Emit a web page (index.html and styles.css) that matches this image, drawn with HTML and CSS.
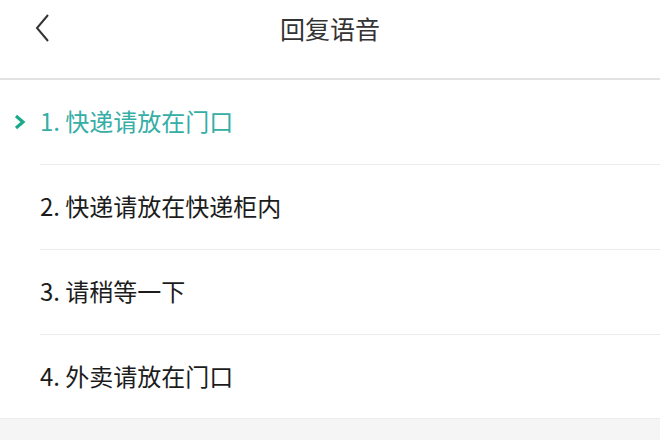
FILE: index.html
```html
<!DOCTYPE html>
<html lang="zh-CN">
<head>
<meta charset="utf-8">
<link rel="stylesheet" href="styles.css">
</head>
<body>
<div class="page">
  <header class="header">
    <span class="back">
      <svg width="18" height="30" viewBox="0 0 18 30"><path d="M14 2 L3 15 L14 28" fill="none" stroke="#333" stroke-width="2"/></svg>
    </span>
    <h1 class="title">回复语音</h1>
  </header>
  <ul class="list">
    <li class="item active">
      <span class="mark"><svg width="12" height="16" viewBox="0 0 12 16"><path d="M2 2 L9 8 L2 14" fill="none" stroke="#1aa98a" stroke-width="3.2"/></svg></span>
      <span class="text">1. 快递请放在门口</span>
    </li>
    <li class="item"><span class="text">2. 快递请放在快递柜内</span></li>
    <li class="item"><span class="text">3. 请稍等一下</span></li>
    <li class="item"><span class="text">4. 外卖请放在门口</span></li>
  </ul>
  <div class="footer"></div>
</div>
</body>
</html>
```
FILE: styles.css
```css
* { box-sizing: border-box; }
html, body { margin: 0; padding: 0; }
body {
  width: 660px;
  height: 440px;
  overflow: hidden;
  background: #fff;
  font-family: "Noto Sans CJK SC", "Noto Sans", sans-serif;
}
.page { display: flex; flex-direction: column; height: 440px; }
.header {
  position: relative;
  height: 80px;
  border-bottom: 2px solid #e2e2e2;
  display: flex;
  align-items: flex-start;
  justify-content: center;
}
.back {
  position: absolute;
  left: 34px;
  top: 13px;
  display: block;
  line-height: 0;
}
.title {
  margin: 0;
  margin-top: 11px;
  font-size: 25px;
  font-weight: 400;
  color: #333;
  line-height: 34px;
}
.list { list-style: none; margin: 0; padding: 0; }
.item {
  position: relative;
  height: 85px;
  margin-left: 40px;
  border-bottom: 1px solid #ececec;
  display: flex;
  align-items: center;
  padding-bottom: 2px;
}
.item:last-child { border-bottom: none; height: 83px; }
.text {
  font-size: 24px;
  color: #1c1c1c;
  line-height: 30px;
}
.active .text { color: #35aea6; }
.mark {
  position: absolute;
  left: -26px;
  top: 34px;
  line-height: 0;
}
.footer { flex: 1; background: #f5f5f5; border-top: 1px solid #ededed; }
```
